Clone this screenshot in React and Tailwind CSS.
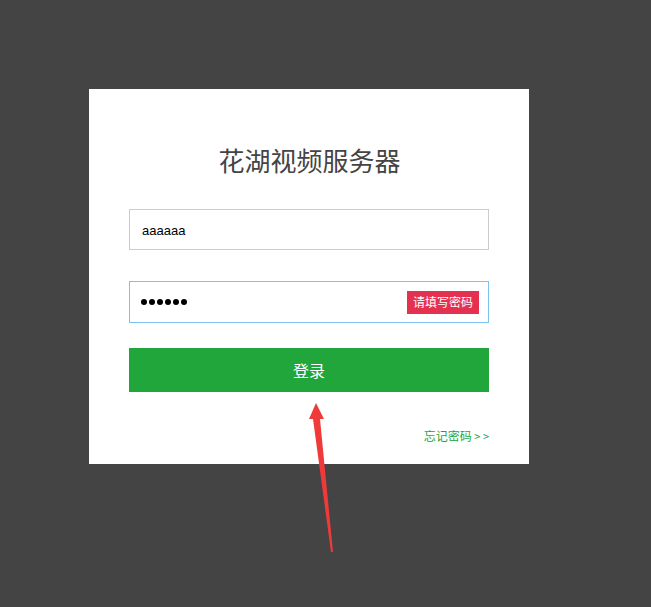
import React from "react";

const font = { fontFamily: '"Noto Sans CJK SC", "Liberation Sans", sans-serif' };

function Arrow() {
  return (
    <svg className="absolute left-0 top-0 pointer-events-none" width="651" height="607">
      <polygon points="316,403 324,419 320,419 333,552 331,552 313,419 309,419" fill="#f03a3a" />
    </svg>
  );
}

export default function App() {
  return (
    <div className="relative w-[651px] h-[607px] bg-[#444444] pt-[89px] pl-[89px]" style={font}>
      <div className="w-[440px] h-[375px] bg-white px-[40px] pt-[53px]">
        <h1 className="text-center text-[26px] leading-[36px] text-[#444444] pl-[1px]">花湖视频服务器</h1>
        <div className="mt-[31px] h-[41px] border border-[#cccccc] flex items-center pl-[12px] pt-[3px]">
          <span className="text-[13px] text-black" style={{ fontFamily: '"Liberation Sans", sans-serif' }}>aaaaaa</span>
        </div>
        <div className="mt-[31px] h-[42px] border border-[#7dc1ef] flex items-center justify-between pl-[11px] pr-[9px]">
          <div className="flex gap-[2px]">
            {[0, 1, 2, 3, 4, 5].map((i) => (
              <span key={i} className="w-[6px] h-[6px] rounded-full bg-black" />
            ))}
          </div>
          <span className="h-[23px] w-[72px] bg-[#e53150] text-white text-[12px] flex items-center justify-center">请填写密码</span>
        </div>
        <button className="mt-[25px] w-full h-[44px] bg-[#21a63b] text-white text-[16px] flex items-center justify-center">登录</button>
        <div className="mt-[37px] flex justify-end">
          <span className="text-[12px] leading-[14px] text-[#21a63b]">忘记密码<span className="text-[11px]">&nbsp;&gt;&nbsp;&gt;</span></span>
        </div>
      </div>
      <Arrow />
    </div>
  );
}
